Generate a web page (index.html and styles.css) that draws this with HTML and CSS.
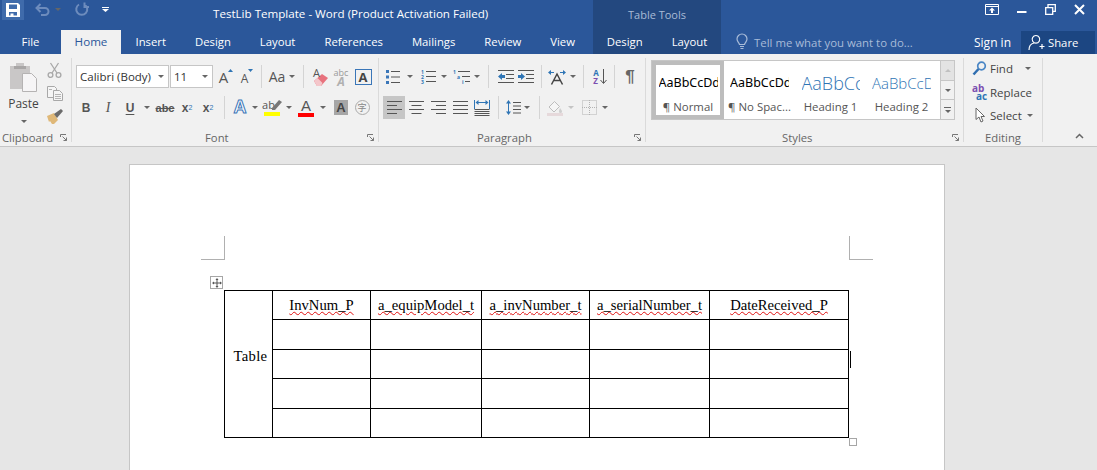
FILE: index.html
```html
<!DOCTYPE html>
<html lang="en">
  <head>
    <meta charset="UTF-8" />
    <title>TestLib Template - Word</title>
    <link rel="stylesheet" href="styles.css">
  </head>
  <body>
    <header class="chrome">
      <div class="chrome-left">
        <div class="title-row">
          <div class="qat">
            <span class="qat-save">
              <svg width="14" height="14" viewBox="0 0 14 14"><path fill="#fff" fill-rule="evenodd" d="M0 0h12l2 2v12H0zM3 1.500v4.500h8V1.500zM3 9v3.500h1.500V10.500h3v2H11V9z"/></svg>
            </span>
            <svg class="qat-undo" width="15" height="13" viewBox="0 0 15 13"><path fill="none" stroke="#6d8cbd" stroke-width="2" d="M2 5h8a3.500 3.500 0 0 1 0 7H6M5.500 1 1.500 5l4 4"/></svg>
            <span class="arrow arrow-dim"></span>
            <svg class="qat-redo" width="14" height="14" viewBox="0 0 14 14"><path fill="none" stroke="#6d8cbd" stroke-width="2" d="M9.500 2.500a5.500 5.500 0 1 1-5.500 0M9.500 .5v4.500H14"/></svg>
            <span class="qat-more"></span>
          </div>
          <div class="doc-title">TestLib Template - Word (Product Activation Failed)</div>
        </div>
        <nav class="tabs">
          <a class="tab tab-file">File</a>
          <a class="tab tab-home">Home</a>
          <a class="tab">Insert</a>
          <a class="tab">Design</a>
          <a class="tab">Layout</a>
          <a class="tab">References</a>
          <a class="tab">Mailings</a>
          <a class="tab">Review</a>
          <a class="tab">View</a>
        </nav>
      </div>

      <div class="table-tools">
        <div class="tools-title">Table Tools</div>
        <nav class="tools-tabs">
          <a class="tab">Design</a>
          <a class="tab">Layout</a>
        </nav>
      </div>

      <div class="chrome-right">
        <div class="window-btns">
          <svg width="14" height="11" viewBox="0 0 14 11"><path fill="none" stroke="#fff" d="M.5 .5h13v10H.5zM.5 2.500h13"/><path fill="#fff" d="M7 3.500 10 6.500H8V9H6V6.500H4z"/></svg>
          <svg width="10" height="10" viewBox="0 0 10 10"><path fill="#fff" d="M0 7h9.500v2H0z"/></svg>
          <svg width="11" height="11" viewBox="0 0 11 11"><path fill="none" stroke="#fff" stroke-width="1.300" d="M.7 3.700h7v6.600h-7zM3 3.500V.7h7.300v6.600H8"/></svg>
          <svg width="11" height="11" viewBox="0 0 11 11"><path stroke="#fff" stroke-width="2" d="M1 1l9 9M10 1l-9 9"/></svg>
        </div>
        <div class="right-row">
          <div class="tell-me">
            <svg width="12" height="16" viewBox="0 0 12 16"><path fill="none" stroke="#a8bbd8" stroke-width="1.200" d="M3.500 10.500C3 8.500 1 7.500 1 5a5 5 0 0 1 10 0c0 2.500-2 3.500-2.500 5.500zM4 12.500h4M4.500 14.500h3"/></svg>
            <span>Tell me what you want to do...</span>
          </div>
          <a class="sign-in">Sign in</a>
          <a class="share">
            <svg width="17" height="17" viewBox="0 0 17 17"><path fill="none" stroke="#fff" stroke-width="1.200" d="M8 1.500a3.800 3.800 0 1 1-.1 0zM1 16c0-4 2.500-6.500 5-7M11.500 12.500h5M14 10v5"/></svg>
            <span>Share</span>
          </a>
        </div>
      </div>
    </header>

    <section class="ribbon">
      <div class="group group-clipboard">
        <div class="clip-body">
          <div class="paste">
            <svg width="29" height="30" viewBox="0 0 29 30"><path fill="#c9c7c7" d="M1 4h6V1h8v3h6v23H1z"/><path fill="#a9a7a7" d="M5 4h12v3H5z"/><path fill="#f6f5f6" stroke="#b5b3b3" d="M13.500 11.500h9l5 5v13h-14z"/></svg>
            <span class="paste-label">Paste</span>
            <span class="arrow"></span>
          </div>
          <div class="clip-tools">
            <svg width="15" height="16" viewBox="0 0 15 16"><path fill="none" stroke="#a8a8a8" stroke-width="1.300" d="M3.500 1 10 11M11.500 1 5 11"/><circle cx="3.500" cy="13" r="2.400" fill="none" stroke="#a8a8a8" stroke-width="1.300"/><circle cx="11.500" cy="13" r="2.400" fill="none" stroke="#a8a8a8" stroke-width="1.300"/></svg>
            <svg width="16" height="15" viewBox="0 0 16 15"><path fill="#f5f5f5" stroke="#a8a8a8" d="M.5 .5h7l2 2v9h-9z"/><path fill="#f5f5f5" stroke="#a8a8a8" d="M6.500 4.500h6l3 3v7h-9z"/><path stroke="#b5b5b5" d="M8 8.500h6M8 10.500h6M8 12.500h6M2 3.500h3"/></svg>
            <svg width="16" height="15" viewBox="0 0 16 15"><path fill="#dfb878" d="M0 7l7-3 4 7-4 4H5L3 12l-1 1z"/><path fill="#6b6b6b" d="M7 5l7-5 2 2-6 7z"/></svg>
          </div>
        </div>
        <div class="group-foot foot-clipboard">
          <span>Clipboard</span>
          <svg class="launcher" width="7" height="7" viewBox="0 0 7 7"><path fill="none" stroke="#777" d="M.5 3V.5H6M2.500 2.500l4 4M3.500 6.500h3v-3"/></svg>
        </div>
      </div>

      <div class="group group-font">
        <div class="ribbon-row font-row1">
          <div class="combo"><span>Calibri (Body)</span><i class="arrow"></i></div>
          <div class="combo"><span>11</span><i class="arrow"></i></div>
          <div class="cell big-a">A<svg width="5" height="3" viewBox="0 0 5 3"><path fill="#2f75b5" d="M2.500 0 5 3H0z"/></svg></div>
          <div class="cell small-a">A<svg width="5" height="3" viewBox="0 0 5 3"><path fill="#2f75b5" d="M0 0h5L2.500 3z"/></svg></div>
          <div class="cell"><i class="sep"></i></div>
          <div class="cell change-case">Aa<i class="arrow"></i></div>
          <div class="cell"><i class="sep"></i></div>
          <div class="cell eraser">
            <span class="eraser-a">A</span>
            <svg width="14" height="12" viewBox="0 0 14 12"><path fill="#e8727d" d="M0 7l8-7 6 4-7 8H3z"/><path fill="#f4c6ca" d="M0 7l3.500-3 5 5L7 12H3z"/></svg>
          </div>
          <div class="cell clear-format"><span class="abc-top">abc</span><span class="a-ital">A</span></div>
          <div class="cell"><span class="boxed-a">A</span></div>
        </div>
        <div class="ribbon-row font-row2">
          <div class="cell fmt fmt-b">B</div>
          <div class="cell fmt fmt-i">I</div>
          <div class="cell fmt fmt-u">U</div>
          <div class="cell"><i class="arrow"></i></div>
          <div class="cell fmt-strike">abc</div>
          <div class="cell fmt-script">x<sub>2</sub></div>
          <div class="cell fmt-script">x<sup>2</sup></div>
          <div class="cell"><i class="sep"></i></div>
          <div class="cell effects-a">A</div>
          <div class="cell"><i class="arrow"></i></div>
          <div class="cell color-btn">
            <span class="color-ab">ab<svg width="10" height="10" viewBox="0 0 10 10"><path fill="#777" d="M0 8l7-8 3 2-7 8H0z"/></svg></span><i class="bar bar-yellow"></i>
          </div>
          <div class="cell"><i class="arrow"></i></div>
          <div class="cell color-btn">
            <span class="color-a">A</span><i class="bar bar-red"></i>
          </div>
          <div class="cell"><i class="arrow"></i></div>
          <div class="cell"><span class="shade-a">A</span></div>
          <div class="cell"><span class="circle-char">字</span></div>
        </div>
        <div class="group-foot foot-font">
          <span>Font</span>
          <svg class="launcher" width="7" height="7" viewBox="0 0 7 7"><path fill="none" stroke="#777" d="M.5 3V.5H6M2.500 2.500l4 4M3.500 6.500h3v-3"/></svg>
        </div>
      </div>

      <div class="group group-para">
        <div class="ribbon-row para-row1">
          <div class="cell">
            <svg width="14" height="14" viewBox="0 0 14 14"><path fill="#3a76b8" d="M0 0h3v3H0zM0 5.500h3v3H0zM0 11h3v3H0z"/><path stroke="#555" d="M5 1.500h9M5 7h9M5 12.500h9"/></svg>
          </div>
          <div class="cell"><i class="arrow"></i></div>
          <div class="cell">
            <svg width="15" height="15" viewBox="0 0 15 15"><text x="0" y="4.500" class="svg-num">1</text><text x="0" y="9.500" class="svg-num">2</text><text x="0" y="14.500" class="svg-num">3</text><path stroke="#555" d="M5 2.500h10M5 7.500h10M5 12.500h10"/></svg>
          </div>
          <div class="cell"><i class="arrow"></i></div>
          <div class="cell">
            <svg width="17" height="15" viewBox="0 0 17 15"><text x="0" y="4.500" class="svg-num">1</text><text x="4" y="9.500" class="svg-num">a</text><text x="9" y="14.500" class="svg-num">i</text><path stroke="#555" d="M5 2.500h12M9 7.500h8M12 12.500h5"/></svg>
          </div>
          <div class="cell"><i class="arrow"></i></div>
          <div class="cell"><i class="sep"></i></div>
          <div class="cell">
            <svg width="16" height="13" viewBox="0 0 16 13"><path stroke="#555" d="M0 .5h16M8 4.500h8M8 8.500h8M0 12.500h16"/><path fill="#2f75b5" d="M0 6.500 4 3v2h3v3H4v2z"/></svg>
          </div>
          <div class="cell">
            <svg width="16" height="13" viewBox="0 0 16 13"><path stroke="#555" d="M0 .5h16M8 4.500h8M8 8.500h8M0 12.500h16"/><path fill="#2f75b5" d="M7 6.500 3 3v2H0v3h3v2z"/></svg>
          </div>
          <div class="cell"><i class="sep"></i></div>
          <div class="cell dir-icon">
            <svg width="18" height="16" viewBox="0 0 18 16"><path fill="#2f75b5" d="M0 3.500 3 1v5zM18 3.500 15 1v5z"/><path stroke="#2f75b5" d="M2 3.500h4M12 3.500h4"/><path fill="none" stroke="#444" stroke-width="1.500" d="M3.500 15.500 9 5l5.500 10.500M6 11.500h6"/></svg>
          </div>
          <div class="cell"><i class="arrow"></i></div>
          <div class="cell"><i class="sep"></i></div>
          <div class="cell sort-icon">
            <span class="sort-letters"><b>A</b><b class="sort-z">Z</b></span>
            <svg width="7" height="15" viewBox="0 0 7 15"><path fill="none" stroke="#555" d="M3.500 0v14M.5 11l3 3.500 3-3.500"/></svg>
          </div>
          <div class="cell"><i class="sep"></i></div>
          <div class="cell pilcrow">¶</div>
        </div>
        <div class="ribbon-row para-row2">
          <div class="cell is-active">
            <svg width="15" height="13" viewBox="0 0 15 13"><path stroke="#555" d="M0 .5h15M0 4.500h10M0 8.500h15M0 12.500h10"/></svg>
          </div>
          <div class="cell">
            <svg width="15" height="13" viewBox="0 0 15 13"><path stroke="#555" d="M0 .5h15M2.500 4.500h10M0 8.500h15M2.500 12.500h10"/></svg>
          </div>
          <div class="cell">
            <svg width="15" height="13" viewBox="0 0 15 13"><path stroke="#555" d="M0 .5h15M5 4.500h10M0 8.500h15M5 12.500h10"/></svg>
          </div>
          <div class="cell">
            <svg width="15" height="13" viewBox="0 0 15 13"><path stroke="#555" d="M0 .5h15M0 4.500h15M0 8.500h15M0 12.500h15"/></svg>
          </div>
          <div class="cell">
            <svg width="16" height="16" viewBox="0 0 16 16"><path stroke="#2f75b5" fill="none" d="M.5 0v9M15.500 0v9M2 2.500h12"/><path fill="#2f75b5" d="M1.500 2.500 4.500 0v5zM14.500 2.500 11.500 0v5z"/><path stroke="#555" d="M.5 9.500h15M.5 11.500h15M.5 13.500h15M.5 15.500h15"/></svg>
          </div>
          <div class="cell"><i class="sep"></i></div>
          <div class="cell">
            <svg width="15" height="15" viewBox="0 0 15 15"><path fill="none" stroke="#2f75b5" d="M2.500 2v11"/><path fill="#2f75b5" d="M2.500 0 5 3.500H0zM2.500 15 5 11.500H0z"/><path stroke="#555" d="M7 2.500h8M7 6h8M7 9.500h8M7 13h8"/></svg>
          </div>
          <div class="cell"><i class="arrow"></i></div>
          <div class="cell"><i class="sep"></i></div>
          <div class="cell">
            <svg width="16" height="16" viewBox="0 0 16 16"><path fill="#f6f6f6" stroke="#bdbdbd" d="M2 7 7.500 1.500l5 5L7 12z"/><path fill="#cfcfcf" d="M13 8c1 1.500 2 2.500 2 3.500a1.500 1.500 0 0 1-3 0c0-1 .5-2 1-3.500z"/><path fill="#e6d9db" d="M0 13h16v3H0z"/></svg>
          </div>
          <div class="cell"><i class="arrow arrow-faint"></i></div>
          <div class="cell">
            <svg width="15" height="15" viewBox="0 0 15 15"><path fill="none" stroke="#b3b3b3" stroke-dasharray="1 1" d="M.5 .5h14v14H.5zM7.500 0v15M0 7.500h15"/></svg>
          </div>
          <div class="cell"><i class="arrow"></i></div>
        </div>
        <div class="group-foot foot-para">
          <span>Paragraph</span>
          <svg class="launcher" width="7" height="7" viewBox="0 0 7 7"><path fill="none" stroke="#777" d="M.5 3V.5H6M2.500 2.500l4 4M3.500 6.500h3v-3"/></svg>
        </div>
      </div>

      <div class="group group-styles">
        <div class="gallery">
          <div class="style-item is-selected">
            <span class="sample">AaBbCcDd</span>
            <span class="style-name">¶ Normal</span>
          </div>
          <div class="style-item">
            <span class="sample">AaBbCcDd</span>
            <span class="style-name">¶ No Spac...</span>
          </div>
          <div class="style-item">
            <span class="sample sample-h1">AaBbCc</span>
            <span class="style-name">Heading 1</span>
          </div>
          <div class="style-item">
            <span class="sample sample-h2">AaBbCcD</span>
            <span class="style-name">Heading 2</span>
          </div>
          <div class="gallery-scroll">
            <span class="scroll-btn scroll-up"><i class="arrow-up"></i></span>
            <span class="scroll-btn"><i class="arrow"></i></span>
            <span class="scroll-btn scroll-more"><i class="more-line"></i><i class="arrow"></i></span>
          </div>
        </div>
        <div class="group-foot foot-styles">
          <span>Styles</span>
          <svg class="launcher" width="7" height="7" viewBox="0 0 7 7"><path fill="none" stroke="#777" d="M.5 3V.5H6M2.500 2.500l4 4M3.500 6.500h3v-3"/></svg>
        </div>
      </div>

      <div class="group group-editing">
        <div class="edit-list">
          <div class="edit-row">
            <svg width="14" height="15" viewBox="0 0 14 15"><circle cx="9" cy="5" r="3.800" fill="none" stroke="#4a86c5" stroke-width="1.700"/><path stroke="#2f6eb0" stroke-width="2.500" d="M6 8l-5 5.500"/></svg>
            <span>Find</span><i class="arrow find-arrow"></i>
          </div>
          <div class="edit-row edit-replace">
            <span class="replace-icon"><b class="rep-ab">ab</b><b class="rep-ac">ac</b></span>
            <span>Replace</span>
          </div>
          <div class="edit-row">
            <svg width="14" height="16" viewBox="0 0 14 16"><path fill="#fff" stroke="#666" d="M3.500 1v11.500l3-2.500 2 5 2-1-2-4.500h3.500z"/></svg>
            <span>Select</span><i class="arrow select-arrow"></i>
          </div>
        </div>
        <div class="group-foot foot-editing"><span>Editing</span></div>
      </div>

      <div class="collapse">
        <svg width="9" height="6" viewBox="0 0 9 6"><path fill="none" stroke="#666" stroke-width="1.500" d="M1 5l3.500-3.500L8 5"/></svg>
      </div>
    </section>

    <main class="doc-area">
      <div class="page">
        <div class="crop-marks">
          <i class="crop crop-left"></i>
          <i class="crop crop-right"></i>
        </div>
        <div class="table-wrap">
          <span class="move-handle">
            <svg width="10" height="10" viewBox="0 0 10 10"><path stroke="#555" d="M5 1v8M1 5h8"/><path fill="#555" d="M5 0 6.500 2h-3zM5 10 3.500 8h3zM0 5 2 3.500v3zM10 5 8 6.500v-3z"/></svg>
          </span>
          <table class="doc-table">
            <colgroup>
              <col class="col-a" /><col class="col-b" /><col class="col-c" />
              <col class="col-d" /><col class="col-e" /><col class="col-f" />
            </colgroup>
            <tr>
              <td rowspan="5" class="side-cell">Table</td>
              <td><span class="misspelt">InvNum_P</span></td>
              <td><span class="misspelt">a_equipModel_t</span></td>
              <td><span class="misspelt">a_invNumber_t</span></td>
              <td><span class="misspelt">a_serialNumber_t</span></td>
              <td><span class="misspelt">DateReceived_P</span></td>
            </tr>
            <tr class="row-b"><td></td><td></td><td></td><td></td><td></td></tr>
            <tr class="row-c"><td></td><td></td><td></td><td></td><td></td></tr>
            <tr class="row-b"><td></td><td></td><td></td><td></td><td></td></tr>
            <tr class="row-c"><td></td><td></td><td></td><td></td><td></td></tr>
          </table>
          <i class="caret"></i>
          <i class="resize-handle"></i>
        </div>
      </div>
    </main>
  </body>
</html>
```

FILE: styles.css
```css
* {
  box-sizing: border-box;
}
html,
body {
  margin: 0;
  padding: 0;
  height: 470px;
  overflow: hidden;
}
body {
  font-family: "Open Sans", "Noto Sans", sans-serif;
  font-size: 12px;
  color: #444;
  background: #e6e6e6;
}
i {
  font-style: normal;
}
svg {
  overflow: visible;
}

/* title bar and tabs */
.chrome {
  display: flex;
  height: 54px;
  background: #2b579a;
  color: #fff;
}
.chrome-left {
  width: 593px;
  flex: none;
}
.title-row {
  display: flex;
  height: 30px;
}
.qat {
  display: flex;
  align-items: flex-start;
  flex: none;
  width: 213px;
}
.qat-save {
  display: flex;
  align-items: center;
  justify-content: center;
  width: 22px;
  height: 20px;
  margin-left: 2px;
  background: #3f6bab;
}
.qat-undo {
  margin: 3px 0 0 11px;
}
.arrow-dim {
  margin: 8px 0 0 5px;
  border-top-color: #6d8cbd;
}
.qat-redo {
  margin: 2px 0 0 14px;
}
.qat-more {
  width: 7px;
  height: 5px;
  margin: 7px 0 0 13px;
  border-top: 1px solid #fff;
  background: linear-gradient(to bottom, transparent 1px, #fff 1px);
  clip-path: polygon(0 0, 100% 0, 100% 40%, 50% 100%, 0 40%);
}
.doc-title {
  padding-top: 6px;
  font-size: 11.600px;
  white-space: nowrap;
}
.tabs,
.tools-tabs {
  display: flex;
  height: 24px;
}
.tab {
  flex: none;
  padding: 4px 14.500px 0;
  font-size: 11.300px;
  white-space: nowrap;
}
.tab-file {
  width: 61px;
  padding: 4px 0 0;
  text-align: center;
}
.tab-home {
  width: 60px;
  padding: 4px 0 0;
  font-size: 11.600px;
  text-align: center;
  background: #f1f1f1;
  color: #2b579a;
}
.table-tools {
  width: 128px;
  flex: none;
  background: #23487f;
}
.tools-title {
  height: 30px;
  padding-top: 7px;
  font-size: 11px;
  text-align: center;
  color: #a9bbd6;
}
.tools-tabs {
  justify-content: center;
}
.chrome-right {
  flex: 1;
}
.window-btns {
  display: flex;
  align-items: center;
  justify-content: flex-end;
  gap: 18px;
  height: 30px;
  padding: 0 12px 12px 0;
}
.right-row {
  display: flex;
  align-items: center;
  height: 24px;
}
.tell-me {
  display: flex;
  align-items: center;
  gap: 6px;
  flex: none;
  width: 253px;
  padding-left: 15px;
  font-size: 11.400px;
  color: #a8bbd8;
}
.sign-in {
  white-space: nowrap;
}
.share {
  display: flex;
  align-items: center;
  gap: 3px;
  flex: none;
  width: 74px;
  height: 23px;
  margin-left: 10px;
  padding-left: 7px;
  font-size: 11.300px;
  background: #1c4682;
}

/* ribbon */
.ribbon {
  display: flex;
  height: 93px;
  padding-top: 4px;
  background: #f1f1f1;
  border-bottom: 1px solid #c6c6c6;
}
.group {
  position: relative;
  display: flex;
  flex-direction: column;
  flex: none;
  height: 84px;
  border-right: 1px solid #dadada;
}
.group-clipboard {
  width: 72px;
}
.group-font {
  width: 307px;
  padding: 7px 0 0 4px;
}
.group-para {
  width: 267px;
  padding: 7px 0 0 4px;
}
.group-styles {
  width: 318px;
  padding: 2px 0 0 5px;
}
.group-editing {
  width: 79px;
}
.group-foot {
  display: flex;
  align-items: center;
  margin-top: auto;
  height: 12px;
  margin-bottom: -1px;
  font-size: 11.300px;
  color: #666;
}
.launcher {
  margin-left: auto;
  margin-right: 4px;
}
.foot-clipboard {
  padding-left: 2px;
}
.foot-font {
  margin-left: -4px;
  padding-left: 133px;
}
.foot-para {
  margin-left: -4px;
  padding-left: 98px;
}
.foot-styles {
  margin-left: -5px;
  padding-left: 136px;
}
.foot-editing {
  justify-content: center;
}
.collapse {
  display: flex;
  align-items: flex-end;
  justify-content: flex-end;
  flex: 1;
  height: 81px;
  padding-right: 13px;
}

.arrow {
  display: inline-block;
  width: 0;
  height: 0;
  border-left: 3px solid transparent;
  border-right: 3px solid transparent;
  border-top: 3px solid #666;
}
.arrow-faint {
  border-top-color: #c4c4c4;
}
.sep {
  display: block;
  width: 1px;
  height: 23px;
  background: #d4d4d4;
}
.ribbon-row {
  display: grid;
  height: 23px;
  margin-bottom: 8px;
}
.cell {
  display: flex;
  align-items: center;
  justify-content: center;
  height: 23px;
}
.font-row1 {
  grid-template-columns: 94px 43px 26px 16px 12px 30px 12px 22px 20px 24px;
}
.font-row2 {
  grid-template-columns: 20px 24px 20px 14px 22px 22px 20px 12px 20px 10px 24px 10px 24px 10px 26px 16px;
}
.para-row1 {
  grid-template-columns: 20px 14px 22px 10px 24px 7px 16px 19px 22px 8px 24px 8px 12px 22px 6px 26px;
}
.para-row2 {
  grid-template-columns: 22px 22px 22px 22px 22px 11px 18px 10px 14px 18px 13px 24px 8px;
}
.is-active {
  background: #c6c6c6;
}

/* clipboard */
.clip-body {
  display: flex;
  padding-top: 4px;
}
.paste {
  display: flex;
  flex-direction: column;
  align-items: center;
  width: 47px;
  color: #444;
}
.paste-label {
  margin-top: 3px;
}
.paste .arrow {
  margin-top: 8px;
}
.clip-tools {
  display: flex;
  flex-direction: column;
  gap: 8px;
  width: 16px;
}

/* font */
.combo {
  display: flex;
  align-items: center;
  justify-content: space-between;
  width: 93px;
  height: 23px;
  padding: 0 4px 0 3px;
  background: #fff;
  border: 1px solid #c6c6c6;
  font-size: 11.500px;
  color: #333;
}
.combo + .combo {
  width: 43px;
}
.big-a,
.small-a {
  align-items: flex-start;
  padding-top: 2px;
  font-size: 15px;
  color: #555;
}
.small-a {
  padding-top: 5px;
  font-size: 12px;
}
.big-a svg,
.small-a svg {
  margin-top: 2px;
}
.small-a svg {
  margin-top: -1px;
}
.change-case {
  gap: 4px;
  font-size: 14px;
  color: #555;
}
.eraser {
  position: relative;
  padding: 6px 0 0 2px;
}
.eraser-a {
  position: absolute;
  left: 4px;
  top: 0;
  font-size: 11px;
  color: #555;
}
.svg-num {
  font-size: 5px;
  font-weight: 700;
  fill: #2f75b5;
}
.clear-format {
  flex-direction: column;
  line-height: 9px;
}
.abc-top {
  font-size: 9px;
  color: #999;
}
.a-ital {
  font-size: 12px;
  font-style: italic;
  font-weight: 700;
  color: #b0b0b0;
}
.boxed-a {
  width: 17px;
  height: 16px;
  border: 1px solid #3a76b8;
  font-weight: 700;
  font-size: 13px;
  line-height: 14px;
  text-align: center;
  color: #444;
}
.fmt {
  font-family: "Liberation Sans", sans-serif;
  font-size: 12px;
  color: #555;
}
.fmt-b {
  font-weight: 700;
}
.fmt-i {
  font-style: italic;
  font-family: "Liberation Serif", serif;
  font-size: 14px;
}
.fmt-u {
  font-weight: 700;
  text-decoration: underline;
  text-underline-offset: 2px;
}
.fmt-strike {
  font-family: "Liberation Sans", sans-serif;
  font-weight: 700;
  font-size: 11px;
  text-decoration: line-through;
  color: #555;
}
.fmt-script {
  font-family: "Liberation Sans", sans-serif;
  font-weight: 700;
  font-size: 12px;
  color: #555;
}
.fmt-script sub,
.fmt-script sup {
  font-size: 7px;
  font-weight: 400;
  color: #2f75b5;
}
.effects-a {
  font-family: "Liberation Sans", sans-serif;
  font-size: 18px;
  font-weight: 700;
  color: #fff;
  -webkit-text-stroke: 1px #3a76b8;
}
.color-btn {
  flex-direction: column;
}
.color-ab {
  display: flex;
  align-items: flex-start;
  height: 13px;
  font-size: 11px;
  line-height: 11px;
  color: #555;
}
.color-ab svg {
  margin: 1px 0 0 -3px;
}
.color-a {
  height: 14px;
  font-family: "Liberation Sans", sans-serif;
  font-size: 15px;
  line-height: 14px;
  color: #555;
}
.bar {
  display: block;
  width: 16px;
  height: 4px;
}
.bar-yellow {
  background: #ffff00;
}
.bar-red {
  background: #ff0000;
}
.shade-a {
  width: 14px;
  height: 15px;
  background: #a6a6a6;
  font-family: "Liberation Sans", sans-serif;
  font-weight: 700;
  font-size: 13px;
  line-height: 15px;
  text-align: center;
  color: #444;
}
.circle-char {
  width: 15px;
  height: 15px;
  border: 1px solid #aaa;
  border-radius: 50%;
  font-family: "Noto Sans CJK SC", sans-serif;
  font-size: 9px;
  line-height: 13px;
  text-align: center;
  color: #888;
}

/* paragraph */
.sort-icon {
  gap: 1px;
}
.sort-letters {
  display: flex;
  flex-direction: column;
  font-size: 8px;
  line-height: 8px;
  color: #2f75b5;
}
.sort-z {
  color: #7b4fb0;
}
.pilcrow {
  font-family: "Liberation Sans", sans-serif;
  font-size: 17px;
  font-weight: 700;
  color: #666;
}

/* styles gallery */
.gallery {
  display: flex;
  width: 304px;
  height: 60px;
  background: #fff;
  border: 1px solid #c6c6c6;
}
.style-item {
  display: flex;
  flex-direction: column;
  align-items: center;
  flex: none;
  width: 71px;
  padding-top: 13px;
}
.is-selected {
  width: 72px;
  padding-top: 9px;
  border: 4px solid #bdbdbd;
}
.sample {
  display: block;
  width: 59px;
  height: 23px;
  overflow: hidden;
  white-space: nowrap;
  font-family: "Noto Sans", sans-serif;
  font-size: 12.500px;
  line-height: 18px;
  color: #000;
}
.sample-h1 {
  width: 58px;
  font-family: "Open Sans", sans-serif;
  font-size: 18px;
  font-weight: 300;
  color: #2e74b5;
}
.sample-h2 {
  width: 59px;
  font-family: "Open Sans", sans-serif;
  font-size: 15px;
  font-weight: 300;
  color: #2e74b5;
}
.style-name {
  margin-top: 2px;
  font-size: 11.400px;
  white-space: nowrap;
  color: #555;
}
.gallery-scroll {
  display: flex;
  flex-direction: column;
  width: 14px;
  margin-left: auto;
  border-left: 1px solid #c6c6c6;
  background: #f1f1f1;
}
.scroll-btn {
  display: flex;
  flex-direction: column;
  align-items: center;
  justify-content: center;
  gap: 2px;
  flex: 1;
  border-bottom: 1px solid #c6c6c6;
}
.scroll-btn:last-child {
  border-bottom: 0;
}
.scroll-up {
  background: #e3e3e3;
}
.arrow-up {
  width: 0;
  height: 0;
  border-left: 3px solid transparent;
  border-right: 3px solid transparent;
  border-bottom: 3px solid #c0c0c0;
}
.more-line {
  width: 7px;
  height: 1px;
  background: #666;
}

/* editing */
.edit-list {
  display: flex;
  flex-direction: column;
  gap: 3px;
  padding: 0 0 0 8px;
  font-size: 11.500px;
}
.edit-row {
  display: flex;
  align-items: center;
  gap: 3px;
  height: 20px;
}
.edit-replace {
  margin-top: 1px;
}
.edit-row svg,
.replace-icon {
  flex: 0 0 15px;
}
.find-arrow {
  margin-left: 9px;
}
.select-arrow {
  margin-left: 2px;
}
.replace-icon {
  display: flex;
  flex-direction: column;
  width: 15px;
  font-size: 10px;
  line-height: 8px;
}
.rep-ab {
  color: #7b4fb0;
}
.rep-ac {
  padding-left: 4px;
  color: #2f75b5;
}

/* document */
.doc-area {
  height: 323px;
  padding: 17px 0 0 129px;
  overflow: hidden;
}
.page {
  width: 816px;
  height: 306px;
  padding-top: 71px;
  background: #fff;
  border: solid #c6c6c6;
  border-width: 1px 1px 0 1px;
}
.crop-marks {
  display: flex;
  justify-content: space-between;
  width: 672px;
  height: 24px;
  margin-left: 71px;
}
.crop {
  display: block;
  width: 24px;
  height: 24px;
  border-bottom: 1px solid #b0b0b0;
}
.crop-left {
  border-right: 1px solid #b0b0b0;
}
.crop-right {
  border-left: 1px solid #b0b0b0;
}
.table-wrap {
  position: relative;
  width: 625px;
  margin: 30px 0 0 94px;
}
.doc-table {
  width: 625px;
  table-layout: fixed;
  border-collapse: collapse;
  font-family: "Liberation Serif", serif;
  font-size: 14.670px;
  color: #000;
}
.doc-table td {
  height: 29px;
  padding: 0;
  border: 1px solid #000;
  text-align: center;
  white-space: nowrap;
}
.doc-table .row-b td {
  height: 30px;
}
.doc-table .side-cell {
  padding: 0 0 15px 4px;
  letter-spacing: .3px;
}
.col-a {
  width: 48px;
}
.col-b {
  width: 98px;
}
.col-c {
  width: 111px;
}
.col-d {
  width: 108px;
}
.col-e {
  width: 120px;
}
.col-f {
  width: 139px;
}
.misspelt {
  text-decoration: underline wavy #e01010 1px;
  text-underline-offset: 1px;
}
.move-handle {
  position: absolute;
  left: -14px;
  top: -14px;
  display: flex;
  align-items: center;
  justify-content: center;
  width: 13px;
  height: 13px;
  background: #fff;
  border: 1px solid #a6a6a6;
}
.caret {
  position: absolute;
  left: 626px;
  top: 61px;
  width: 1px;
  height: 17px;
  background: #000;
}
.resize-handle {
  position: absolute;
  left: 625px;
  top: 148px;
  width: 8px;
  height: 8px;
  background: #fff;
  border: 1px solid #a6a6a6;
}
```
